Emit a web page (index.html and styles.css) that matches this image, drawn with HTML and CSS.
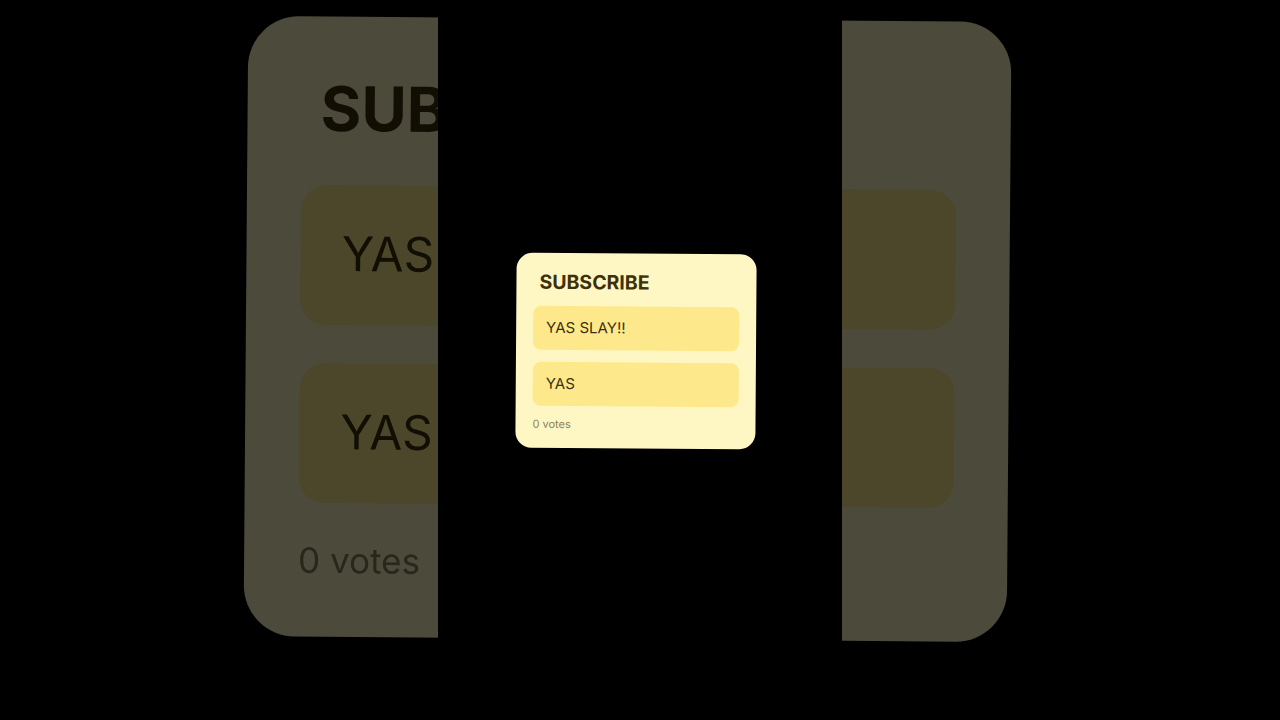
FILE: index.html
```html
<!DOCTYPE html>
<html lang="en">
<head>
<meta charset="utf-8">
<title>Subscribe poll</title>
<link rel="stylesheet" href="styles.css">
</head>
<body>
<div class="stage">
  <div class="layer layer--back" aria-hidden="true">
    <div class="card">
      <div class="card__title">SUBSCRIBE</div>
      <div class="card__options">
        <div class="option">YAS SLAY!!</div>
        <div class="option">YAS</div>
      </div>
      <div class="card__votes">0 votes</div>
    </div>
  </div>
  <div class="strip"></div>
  <div class="layer layer--front">
    <div class="card">
      <div class="card__title">SUBSCRIBE</div>
      <div class="card__options">
        <div class="option">YAS SLAY!!</div>
        <div class="option">YAS</div>
      </div>
      <div class="card__votes">0 votes</div>
    </div>
  </div>
</div>
</body>
</html>
```
FILE: styles.css
```css
html, body {
  margin: 0;
  padding: 0;
  background: #000;
}
.stage {
  width: 1280px;
  height: 720px;
  overflow: hidden;
  display: grid;
  place-items: center;
  background: #000;
  font-family: Inter, "Noto Sans", "Liberation Sans", sans-serif;
}
.layer, .strip {
  grid-area: 1 / 1;
}
.strip {
  width: 404px;
  height: 720px;
  background: #000;
  z-index: 2;
}
.layer--back {
  z-index: 1;
  transform: translate(-12.5px, -31.5px) scale(3.18) rotate(0.45deg);
  filter: brightness(0.3);
}
.layer--front {
  z-index: 3;
  transform: translate(-4px, -9.5px) rotate(0.4deg);
}
.card {
  box-sizing: border-box;
  width: 240px;
  height: 195px;
  background: #fef7c3;
  border-radius: 16px;
  padding: 17px 17px 0;
  display: flex;
  flex-direction: column;
}
.card__title {
  font-size: 19.5px;
  font-weight: 700;
  line-height: 24px;
  color: #3d300b;
  padding-left: 6px;
}
.card__options {
  margin-top: 11.5px;
  display: flex;
  flex-direction: column;
  gap: 12px;
}
.option {
  height: 44px;
  border-radius: 8px;
  background: #fde98b;
  display: flex;
  align-items: center;
  padding-left: 13px;
  font-size: 15px;
  font-weight: 400;
  color: #3a2e0c;
}
.card__votes {
  margin-top: 11px;
  font-size: 11px;
  line-height: 14px;
  color: #8a7e5a;
}
```
